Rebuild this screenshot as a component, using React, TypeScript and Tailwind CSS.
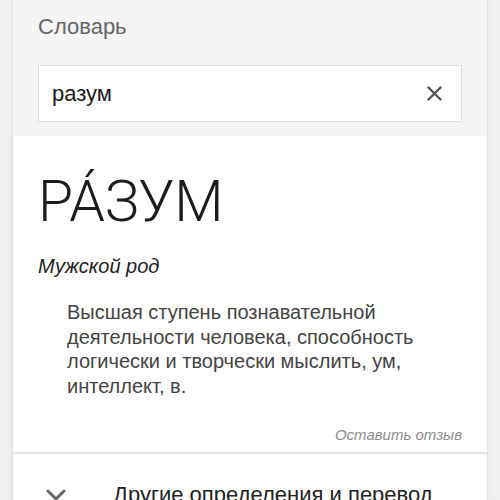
export default function App() {
  return (
    <div
      className="w-[500px] h-[500px] overflow-hidden bg-[#efefef] px-[12px]"
      style={{ fontFamily: '"Liberation Sans", Arial, sans-serif' }}
    >
      <div className="h-full border-x border-[#e2e2e2] shadow-[0_0_2px_rgba(0,0,0,0.06)]">
        {/* header with search */}
        <div className="bg-[#f4f4f4] px-[25px] pt-[13px] pb-[14px]">
          <div className="text-[22px] leading-[28px] text-[#666]">Словарь</div>
          <div className="mt-[24px] h-[57px] flex items-center bg-white border border-[#dcdcdc] pl-[13px] pr-[19px]">
            <span className="flex-1 text-[22px] text-[#1a1a1a]">разум</span>
            <svg width="15" height="15" viewBox="0 0 15 15" className="text-[#555]">
              <path d="M1.5 1.5 L13.5 13.5 M13.5 1.5 L1.5 13.5" stroke="currentColor" strokeWidth="2.4" strokeLinecap="round" />
            </svg>
          </div>
        </div>

        {/* definition card */}
        <div className="bg-white px-[25px] pt-[34px] pb-[6px]">
          <h1
            className="text-[57px] leading-[64px] font-light text-[#1c1c1c]"
            style={{ fontFamily: 'Roboto, "Liberation Sans", sans-serif' }}
          >
            РА́ЗУМ
          </h1>
          <div className="mt-[20px] text-[20px] leading-[24px] italic text-[#222]">Мужской род</div>
          <p className="mt-[22px] pl-[29px] text-[20px] leading-[24.5px] text-[#444]">
            Высшая ступень познавательной
            <br />
            деятельности человека, способность
            <br />
            логически и творчески мыслить, ум,
            <br />
            интеллект, в.
          </p>
          <div className="mt-[26px] text-right text-[15px] leading-[22px] italic text-[#8c8c8c]">Оставить отзыв</div>
        </div>

        {/* more section */}
        <div className="bg-white border-t-2 border-[#e4e4e4] flex items-center pt-[27px]">
          <svg width="20" height="12" viewBox="0 0 20 12" className="ml-[33px] text-[#666]">
            <path d="M2 2 L10 10 L18 2" fill="none" stroke="currentColor" strokeWidth="3" strokeLinecap="round" strokeLinejoin="round" />
          </svg>
          <span className="ml-[47px] text-[22px] leading-[28px] text-[#222]">Другие определения и перевод</span>
        </div>
      </div>
    </div>
  );
}
